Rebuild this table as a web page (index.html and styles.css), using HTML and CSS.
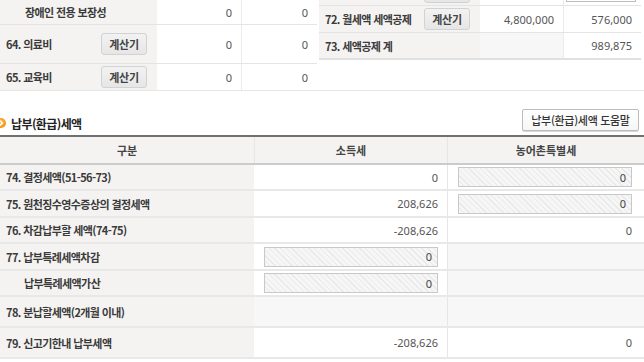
FILE: index.html
```html
<!DOCTYPE html>
<html lang="ko">
<head>
<meta charset="utf-8">
<link rel="stylesheet" href="styles.css">
</head>
<body>
<div class="top">
  <div class="tbl tbl-left">
    <div class="row h24">
      <div class="lbl indent">장애인 전용 보장성</div>
      <div class="val">0</div>
      <div class="val sep">0</div>
    </div>
    <div class="row h38">
      <div class="lbl"><span>64. 의료비</span><span class="calc">계산기</span></div>
      <div class="val">0</div>
      <div class="val sep">0</div>
    </div>
    <div class="row h26 last">
      <div class="lbl"><span>65. 교육비</span><span class="calc">계산기</span></div>
      <div class="val">0</div>
      <div class="val sep">0</div>
    </div>
  </div>
  <div class="tbl tbl-right">
    <div class="row h27">
      <div class="lbl"><span></span><span class="calc"></span></div>
      <div class="val"></div>
      <div class="val sep"><span class="box"></span></div>
    </div>
    <div class="row h26">
      <div class="lbl"><span>72. 월세액 세액공제</span><span class="calc">계산기</span></div>
      <div class="val">4,800,000</div>
      <div class="val sep">576,000</div>
    </div>
    <div class="row h25 end">
      <div class="lbl"><span>73. 세액공제 계</span></div>
      <div class="val dis"></div>
      <div class="val sep">989,875</div>
    </div>
  </div>
</div>

<div class="sec">
  <div class="sec-title"><span class="dot"><svg width="10" height="10" viewBox="0 0 10 10"><path d="M4 2.6 L6.4 5 L4 7.4" fill="none" stroke="#fff" stroke-width="1.6"/></svg></span>납부(환급)세액</div>
  <span class="help">납부(환급)세액 도움말</span>
</div>

<div class="main">
  <div class="mrow head">
    <div class="hc">구분</div>
    <div class="hc bl">소득세</div>
    <div class="hc bl">농어촌특별세</div>
  </div>
  <div class="mrow m25">
    <div class="ml">74. 결정세액(51-56-73)</div>
    <div class="mv">0</div>
    <div class="mv bl"><span class="hatch">0</span></div>
  </div>
  <div class="mrow m26">
    <div class="ml">75. 원천징수영수증상의 결정세액</div>
    <div class="mv">208,626</div>
    <div class="mv bl"><span class="hatch">0</span></div>
  </div>
  <div class="mrow m25">
    <div class="ml">76. 차감납부할 세액(74-75)</div>
    <div class="mv">-208,626</div>
    <div class="mv bl">0</div>
  </div>
  <div class="mrow m26">
    <div class="ml">77. 납부특례세액차감</div>
    <div class="mv"><span class="hatch">0</span></div>
    <div class="mv bl dis"></div>
  </div>
  <div class="mrow m25">
    <div class="ml sub">납부특례세액가산</div>
    <div class="mv"><span class="hatch">0</span></div>
    <div class="mv bl dis"></div>
  </div>
  <div class="mrow m30">
    <div class="ml">78. 분납할세액(2개월 이내)</div>
    <div class="mv dis"></div>
    <div class="mv bl dis"></div>
  </div>
  <div class="mrow m30">
    <div class="ml">79. 신고기한내 납부세액</div>
    <div class="mv">-208,626</div>
    <div class="mv bl">0</div>
  </div>
</div>
</body>
</html>
```
FILE: styles.css
```css
html, body {
  margin: 0;
  padding: 0;
  background: #fff;
  overflow: hidden;
}
body {
  width: 644px;
  font-family: "Noto Sans CJK KR", "Noto Sans", sans-serif;
  font-size: 11px;
  color: #333;
}
.top {
  display: flex;
  height: 90px;
  border-bottom: 1px solid #e6e6e6;
}
.tbl-left { width: 317px; }
.tbl-right { width: 322px; margin-left: 2px; margin-top: -22px; }
.row {
  display: grid;
  border-bottom: 1px solid #e4e4e4;
}
.row.last { border-bottom: 0; }
.row.end { border-bottom: 2px solid #e0e0e0; }
.tbl-left .row { grid-template-columns: 157px 84px 76px; }
.tbl-right .row { grid-template-columns: 161px 83px 78px; }
.h24 { height: 24px; }
.h25 { height: 25px; }
.h26 { height: 26px; }
.h27 { height: 27px; }
.h38 { height: 38px; }
.lbl {
  background: #f4f3f1;
  display: flex;
  align-items: center;
  justify-content: space-between;
  padding: 0 10px 0 6px;
  font-weight: 700;
  letter-spacing: -0.6px;
  white-space: nowrap;
  color: #3a3a3a;
}
.lbl.indent { padding-left: 25px; }
.calc {
  width: 46px;
  height: 22px;
  box-sizing: border-box;
  border: 1px solid #d2d2d2;
  border-radius: 3px;
  background: linear-gradient(#f2f2f2, #e6e6e6);
  display: flex;
  align-items: center;
  justify-content: center;
  font-weight: 700;
  color: #444;
  letter-spacing: -0.3px;
}
.val {
  background: #fff;
  display: flex;
  align-items: center;
  justify-content: flex-end;
  padding-right: 9px;
  font-family: "Noto Sans", sans-serif;
  color: #555;
}
.sep { border-left: 1px solid #ebebeb; }
.dis { background: #f7f7f7; }
.box {
  width: 70px;
  height: 20px;
  box-sizing: border-box;
  border: 1px solid #bdbdbd;
  background: #fff;
  margin-right: -4px;
}

.sec {
  height: 44px;
  box-sizing: border-box;
  display: flex;
  align-items: flex-end;
  justify-content: space-between;
  padding-bottom: 4px;
}
.sec-title {
  display: flex;
  align-items: center;
  height: 16px;
  font-weight: 700;
  font-size: 12px;
  color: #222;
  letter-spacing: -0.6px;
}
.dot {
  width: 10px;
  height: 10px;
  border-radius: 50%;
  background: radial-gradient(circle at 40% 35%, #ffb84a, #f08a00);
  margin-left: -4px;
  margin-right: 5px;
  margin-top: -1px;
  display: block;
}
.dot svg { display: block; }
.help {
  width: 117px;
  height: 22px;
  box-sizing: border-box;
  border: 1px solid #bcbcbc;
  border-radius: 2px;
  background: linear-gradient(#fff, #f6f6f6);
  box-shadow: 0 1px 0 #d8d8d8;
  display: flex;
  align-items: center;
  justify-content: center;
  margin-right: 5px;
  font-size: 11px;
  font-weight: 500;
  color: #333;
  letter-spacing: -0.3px;
  white-space: nowrap;
}

.main {
  border-top: 2px solid #707070;
}
.mrow {
  display: grid;
  grid-template-columns: 254px 193px 197px;
  border-bottom: 2px solid #e8e8e8;
}
.mrow.head {
  height: 26px;
  border-bottom: 2px solid #cbcbcb;
}
.m25 { height: 24px; }
.m26 { height: 25px; }
.m30 { height: 29px; }
.hc {
  background: #f4f3f1;
  display: flex;
  align-items: center;
  justify-content: center;
  color: #444;
  font-weight: 700;
}
.bl { border-left: 1px solid #e6e6e6; }
.ml {
  background: #f4f3f1;
  display: flex;
  align-items: center;
  padding-left: 6px;
  font-weight: 700;
  letter-spacing: -0.6px;
  white-space: nowrap;
  color: #3a3a3a;
}
.ml.sub { padding-left: 24px; }
.mv {
  background: #fff;
  display: flex;
  align-items: center;
  justify-content: flex-end;
  padding: 0 9px 0 10px;
  font-family: "Noto Sans", sans-serif;
  color: #555;
}
.mrow .mv:last-child { padding-right: 12px; }
.mv.dis { background: #f7f7f7; }
.hatch {
  flex: 1;
  height: 20px;
  box-sizing: border-box;
  border: 1px solid #c8c8c8;
  background: repeating-linear-gradient(45deg, #f6f6f6 0 3px, #e9e9e9 3px 4px);
  display: flex;
  align-items: center;
  justify-content: flex-end;
  padding-right: 5px;
  color: #444;
}
```
